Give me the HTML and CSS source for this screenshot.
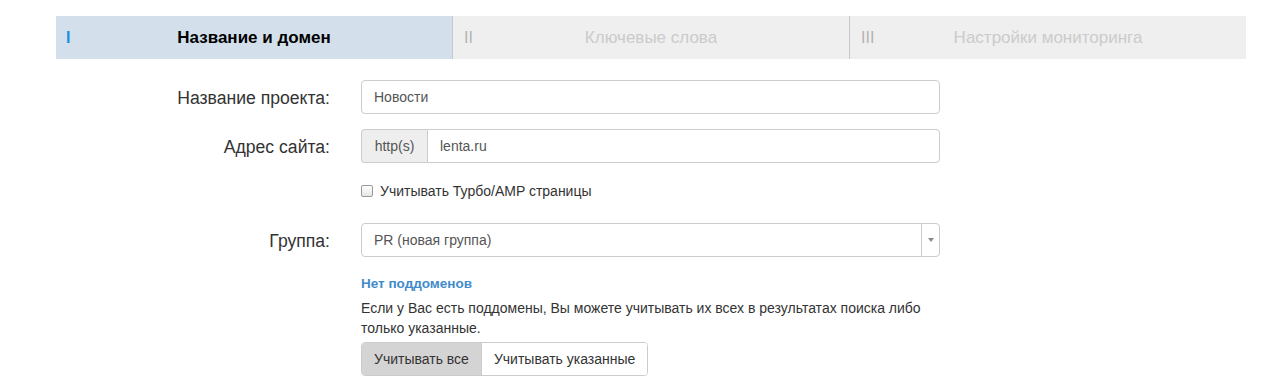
FILE: index.html
```html
<!DOCTYPE html>
<html lang="ru">
<head>
<meta charset="utf-8">
<link rel="stylesheet" href="styles.css">
</head>
<body>
<div class="wizard">
  <div class="steps">
    <div class="step active"><span class="num">I</span><span class="title">Название и домен</span></div>
    <div class="step"><span class="num">II</span><span class="title">Ключевые слова</span></div>
    <div class="step"><span class="num">III</span><span class="title">Настройки мониторинга</span></div>
  </div>
  <form class="form">
    <div class="row">
      <label class="label">Название проекта:</label>
      <div class="field"><div class="input">Новости</div></div>
    </div>
    <div class="row">
      <label class="label">Адрес сайта:</label>
      <div class="field">
        <div class="input-group">
          <span class="addon">http(s)</span>
          <div class="input grouped">lenta.ru</div>
        </div>
      </div>
    </div>
    <div class="row check-row">
      <div class="label"></div>
      <div class="field"><label class="check"><span class="box"></span>Учитывать Турбо/AMP страницы</label></div>
    </div>
    <div class="row group-row">
      <label class="label">Группа:</label>
      <div class="field">
        <div class="select"><span class="sel-text">PR (новая группа)</span><span class="sel-arrow"><span class="tri"></span></span></div>
      </div>
    </div>
    <div class="row sub-row">
      <div class="label"></div>
      <div class="field">
        <div class="sub-title">Нет поддоменов</div>
        <p class="help">Если у Вас есть поддомены, Вы можете учитывать их всех в результатах поиска либо только указанные.</p>
        <div class="btn-group">
          <span class="btn on">Учитывать все</span><span class="btn">Учитывать указанные</span>
        </div>
      </div>
    </div>
  </form>
</div>
</body>
</html>
```
FILE: styles.css
```css
html, body { margin: 0; padding: 0; background: #fff; }
body { font-family: "Liberation Sans", Arial, sans-serif; color: #333; font-size: 14px; }
.wizard { padding: 16px 15px 0 56px; }
.steps { display: flex; width: 1190px; height: 43px; background: #efefef; }
.step { flex: 1; display: flex; align-items: center; position: relative; border-left: 1px solid #c8c8c8; color: #cbcbcb; font-size: 17px; }
.step:first-child { border-left: none; }
.step.active { background: #d3e0eb; color: #000; }
.step .num { position: absolute; left: 11px; top: 13px; font-size: 16px; color: #b4b4b4; }
.step.active .num { color: #1a8fe6; left: 10px; font-weight: bold; }
.step .title { flex: 1; text-align: center; }
.step.active .title { font-weight: bold; font-size: 17px; }
.form { padding-top: 21px; }
.row { display: flex; align-items: center; margin-bottom: 15px; }
.label { width: 274px; text-align: right; font-size: 17.6px; color: #333; padding-right: 31px; padding-top: 2px; }
.field { width: 579px; }
.input { height: 32px; border: 1px solid #ccc; border-radius: 4px; padding: 0 12px; line-height: 32px; font-size: 14px; color: #555; background: #fff; }
.input-group { display: flex; }
.addon { display: block; box-sizing: border-box; width: 66px; height: 34px; line-height: 32px; text-align: center; border: 1px solid #ccc; border-right: none; border-radius: 4px 0 0 4px; background: #eee; color: #555; font-size: 14px; }
.input.grouped { flex: 1; border-radius: 0 4px 4px 0; }
.check-row { padding-top: 5px; margin-bottom: 24px; }
.check { display: flex; align-items: center; font-size: 14px; color: #333; }
.box { width: 10px; height: 10px; border: 1px solid #999; border-radius: 2px; background: linear-gradient(#fff, #e6e6e6); margin-right: 7px; }
.select { display: flex; height: 32px; border: 1px solid #ccc; border-radius: 4px; font-size: 14px; color: #555; }
.sel-text { flex: 1; line-height: 32px; padding-left: 12px; }
.sel-arrow { width: 17px; border-left: 1px solid #ccc; display: flex; align-items: center; justify-content: center; }
.tri { width: 0; height: 0; border-left: 3px solid transparent; border-right: 3px solid transparent; border-top: 4px solid #888; }
.sub-row { align-items: flex-start; margin-top: 19px; }
.sub-title { font-weight: bold; color: #428bca; font-size: 13.5px; line-height: 15px; }
.help { margin: 7px 0 4px; line-height: 20px; font-size: 14px; color: #333; width: 579px; }
.btn-group { display: inline-flex; border: 1px solid #ccc; border-radius: 4px; overflow: hidden; }
.btn { display: block; height: 32px; line-height: 32px; padding: 0 12px; font-size: 14px; color: #333; background: #fff; }
.btn.on { background: #d4d4d4; border-right: 1px solid #ccc; }
```
